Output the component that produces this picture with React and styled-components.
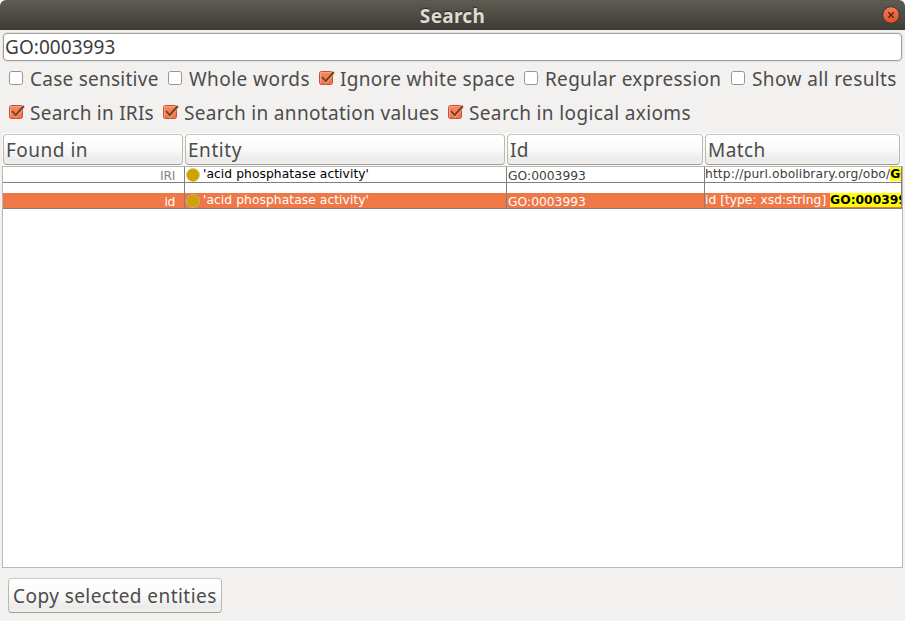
import React from "react";
import styled, { createGlobalStyle, css } from "styled-components";

const Global = createGlobalStyle`
  * { box-sizing: border-box; }
  html, body { margin: 0; padding: 0; background: #fff; }
  body { overflow: hidden; }
`;

const Window = styled.div`
  width: 905px;
  height: 621px;
  display: flex;
  flex-direction: column;
  background: #f2f1f0;
  border-radius: 6px 6px 0 0;
  overflow: hidden;
  color: #4c4c4c;
  font: 19px/24px "Noto Sans", "Open Sans", sans-serif;
  white-space: nowrap;
`;

const TitleBar = styled.header`
  flex: none;
  height: 30px;
  display: grid;
  grid-template-columns: 23px 1fr 23px;
  align-items: center;
  background: linear-gradient(#55534b 0, #5f5d54 1px, #5a584f 3px, #3d3c37 100%);
  color: #dfdbd2;
`;

const Title = styled.h1`
  grid-column: 2;
  margin: 0;
  padding: 2px 0 0;
  text-align: center;
  font-size: 19px;
  line-height: 24px;
  font-weight: 700;
  letter-spacing: 0.3px;
  text-shadow: 0 -1px 1px #2b2a27;
`;

const CloseButton = styled.button`
  width: 18px;
  height: 18px;
  padding: 0;
  border: 0;
  background: none;
  svg { display: block; }
`;

const SearchField = styled.input`
  flex: none;
  width: 899px;
  height: 28px;
  margin: 3px 0 1px 3px;
  padding: 0 0 0 1px;
  border: 1px solid #a09f9c;
  border-radius: 4px;
  outline: 0;
  box-shadow: 0 0 0 1px #e2e1df;
  background: #fff;
  color: #3c3c3c;
  font: 19px/24px "Noto Sans", "Open Sans", sans-serif;
  letter-spacing: ${(p) => p.$spacing}px;
`;

const Options = styled.div`
  flex: none;
  height: 71px;
  padding: 4px 0 0 8px;
`;

const OptionRow = styled.div`
  display: flex;
  height: 34px;
`;

const Option = styled.label`
  flex: none;
  display: flex;
  width: ${(p) => p.$width}px;
  gap: 5px;
  letter-spacing: ${(p) => p.$spacing}px;
  svg { flex: none; margin-top: 4px; }
  span { padding-top: 1px; }
`;

const HeaderRow = styled.div`
  flex: none;
  width: 901px;
  height: 33px;
  margin-left: 2px;
  padding: 1px 0 1px 1px;
  display: grid;
  grid-template-columns: 180px 320px 196px 195px;
  gap: 2px;
  background: #f8f8f7;
`;

const raised = css`
  border: 1px solid #b8b6b2;
  border-color: #c9c8c2 #bab8b3 #a09e99;
  border-radius: 4px;
  background: linear-gradient(#fff 0, #fbfbfb 45%, #ecebea 85%, #f0efee 100%);
`;

const HeaderCell = styled.div`
  ${raised}
  height: 31px;
  padding: 3px 0 0 2px;
  letter-spacing: ${(p) => p.$spacing}px;
`;

const Results = styled.div`
  flex: none;
  width: 901px;
  height: 402px;
  margin-left: 2px;
  border: 1px solid #bbb8b2;
  background: #fff;
`;

const ResultRow = styled.div`
  display: grid;
  grid-template-columns: 182px 322px 198px 197px;
  height: ${(p) => (p.$selected ? 26 : 16)}px;
  border-bottom: 1px solid #808080;
  color: ${(p) => (p.$selected ? "#fff" : "#404040")};
  background: ${(p) =>
    p.$selected ? "linear-gradient(#fff 10px, #f07746 10px)" : "#fff"};
  font: 12.3px/15px "DejaVu Sans", sans-serif;
`;

const Cell = styled.div`
  min-width: 0;
  overflow: hidden;
  display: flex;
  align-items: flex-end;
  justify-content: ${(p) => (p.$right ? "flex-end" : "flex-start")};
  padding: 0 ${(p) => (p.$right ? 9 : 0)}px 0 ${(p) => p.$inset || 0}px;
  border-right: 1px solid #808080;
  color: ${(p) => p.$color || "inherit"};
  letter-spacing: ${(p) => p.$spacing || 0}px;
`;

const CellText = styled.span`
  flex: none;
  height: 15px;
  line-height: ${(p) => (p.$low ? 19 : 15)}px;
  white-space: pre;
`;

const Dot = styled.i`
  flex: none;
  width: 14px;
  height: 14px;
  margin: 0 3px 0 1px;
  border-radius: 50%;
  border: 1px solid ${(p) => (p.$selected ? "#c4b08c" : "#dfc775")};
  background: #cca300;
`;

const Hit = styled.mark`
  flex: none;
  height: 14px;
  margin-bottom: 1px;
  background: #ff0;
  color: #000;
  font-weight: 700;
  line-height: 15px;
  letter-spacing: 0;
`;

const Footer = styled.footer`
  padding: 10px 0 0 8px;
`;

const CopyButton = styled.button`
  ${raised}
  width: 214px;
  height: 35px;
  padding: 1px 0 0 4px;
  text-align: left;
  color: #4c4c4c;
  font: 19px/24px "Noto Sans", "Open Sans", sans-serif;
  letter-spacing: ${(p) => p.$spacing}px;
`;

function CheckBox({ checked }) {
  return (
    <svg width="17" height="16" viewBox="0 0 17 16">
      <defs>
        <linearGradient id="tick-fill" x2="0" y2="1">
          <stop stopColor="#f58a62" />
          <stop offset="1" stopColor="#f1703f" />
        </linearGradient>
      </defs>
      <rect
        x="1.5" y="1.5" width="13" height="13" rx="2"
        fill={checked ? "url(#tick-fill)" : "#fff"}
        stroke={checked ? "#bd5630" : "#979592"}
      />
      {checked && (
        <>
          <path d="M2.5 13V2.5h11" fill="none" stroke="#f8a27f" />
          <path d="M4 8l4 4.4 8-9.8" fill="none" stroke="#f9a98a" strokeWidth="3" opacity=".55" />
          <path d="M4 7.2l3.7 4L15.8 2" fill="none" stroke="#74402b" strokeWidth="1.9" />
        </>
      )}
    </svg>
  );
}

function CloseIcon() {
  return (
    <svg width="18" height="18" viewBox="0 0 18 18">
      <defs>
        <linearGradient id="close-fill" x2="0" y2="1">
          <stop stopColor="#f37f5b" />
          <stop offset="1" stopColor="#e24e1b" />
        </linearGradient>
      </defs>
      <circle cx="9" cy="9" r="8.3" fill="url(#close-fill)" stroke="#393732" />
      <path d="M6.3 6.3l5.4 5.4m0-5.4l-5.4 5.4" stroke="#452517" strokeWidth="1.3" />
    </svg>
  );
}

const options = [
  [
    { label: "Case sensitive", width: 159, spacing: 0.25 },
    { label: "Whole words", width: 151, spacing: 0.44 },
    { label: "Ignore white space", width: 205, spacing: 0.3, checked: true },
    { label: "Regular expression", width: 207, spacing: 0.3 },
    { label: "Show all results", width: 170, spacing: 0.4 },
  ],
  [
    { label: "Search in IRIs", width: 154, spacing: 0.25, checked: true },
    { label: "Search in annotation values", width: 285, spacing: 0.32, checked: true },
    { label: "Search in logical axioms", width: 260, spacing: 0.36, checked: true },
  ],
];

const columns = [
  { label: "Found in", spacing: 0.5 },
  { label: "Entity", spacing: 0.55 },
  { label: "Id", spacing: 0.2 },
  { label: "Match", spacing: 0.4 },
];

const results = [
  { foundIn: "IRI", match: "http://purl.obolibrary.org/obo/", spacing: 0.12, hit: "GO:0003993" },
  { foundIn: "id", match: "id [type: xsd:string] ", spacing: 0, hit: "GO:0003993", selected: true },
];

export default function App() {
  return (
    <>
      <Global />
      <Window>
        <TitleBar>
          <Title>Search</Title>
          <CloseButton aria-label="Close"><CloseIcon /></CloseButton>
        </TitleBar>
        <SearchField defaultValue="GO:0003993" $spacing={0.05} />
        <Options>
          {options.map((row, i) => (
            <OptionRow key={i}>
              {row.map((o) => (
                <Option key={o.label} $width={o.width} $spacing={o.spacing}>
                  <CheckBox checked={o.checked} />
                  <span>{o.label}</span>
                </Option>
              ))}
            </OptionRow>
          ))}
        </Options>
        <HeaderRow>
          {columns.map((c) => (
            <HeaderCell key={c.label} $spacing={c.spacing}>{c.label}</HeaderCell>
          ))}
        </HeaderRow>
        <Results>
          {results.map((r) => (
            <ResultRow key={r.foundIn} $selected={r.selected}>
              <Cell $right $spacing={-0.3} $color={r.selected ? undefined : "#858585"}>
                <CellText $low>{r.foundIn}</CellText>
              </Cell>
              <Cell $spacing={0.06} $color={r.selected ? undefined : "#000"}>
                <Dot $selected={r.selected} />
                <CellText>'acid phosphatase activity'</CellText>
              </Cell>
              <Cell $inset={1}><CellText $low>GO:0003993</CellText></Cell>
              <Cell $spacing={r.spacing}>
                <CellText>{r.match}</CellText>
                <Hit>{r.hit}</Hit>
              </Cell>
            </ResultRow>
          ))}
        </Results>
        <Footer>
          <CopyButton $spacing={0.44}>Copy selected entities</CopyButton>
        </Footer>
      </Window>
    </>
  );
}
